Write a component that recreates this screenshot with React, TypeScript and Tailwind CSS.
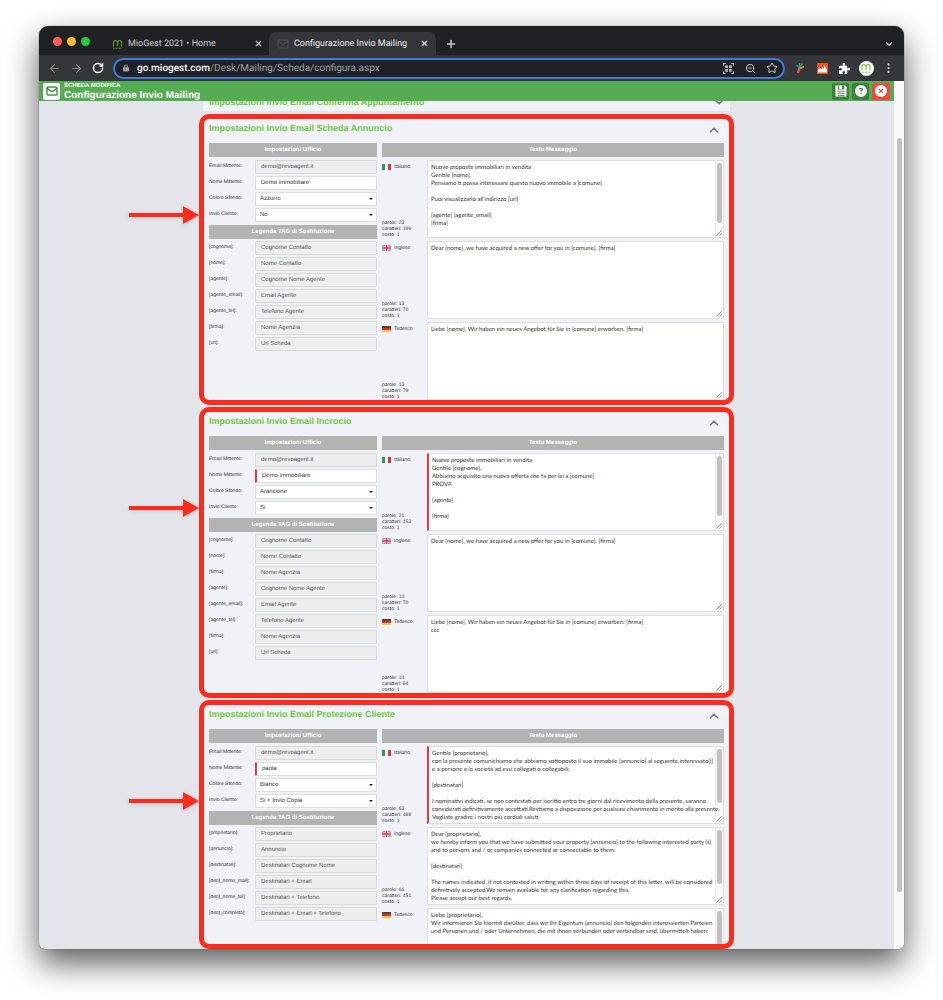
import React from "react";
import {
  ArrowLeft,
  ArrowRight,
  ChevronDown,
  ChevronUp,
  Mail,
  Plus,
  RotateCw,
  Star,
  X,
  ZoomOut,
} from "lucide-react";
import {
  FaCircleQuestion,
  FaCircleXmark,
  FaLock,
  FaPuzzlePiece,
} from "react-icons/fa6";

interface Field {
  label: string;
  value: string;
}

interface Message {
  lang: "it" | "en" | "de";
  words?: number;
  chars?: number;
  text: string;
  scroll?: "long" | "short";
  edited?: boolean;
}

interface Section {
  id: string;
  title: string;
  sender: string;
  edited?: boolean;
  color: string;
  send: string;
  tags: Field[];
  messages: Message[];
}

const sections: Section[] = [
  {
    id: "annuncio",
    title: "Impostazioni Invio Email Scheda Annuncio",
    sender: "Demo immobiliare",
    color: "Azzurro",
    send: "No",
    tags: [
      { label: "[cognome]:", value: "Cognome Contatto" },
      { label: "[nome]:", value: "Nome Contatto" },
      { label: "[agente]:", value: "Cognome Nome Agente" },
      { label: "[agente_email]:", value: "Email Agente" },
      { label: "[agente_tel]:", value: "Telefono Agente" },
      { label: "[firma]:", value: "Nome Agenzia" },
      { label: "[url]:", value: "Url Scheda" },
    ],
    messages: [
      {
        lang: "it",
        words: 23,
        chars: 199,
        scroll: "long",
        text: "Nuove proposte immobiliari in vendita\nGentile [nome].\nPensiamo ti possa interessare questo nuovo immobile a [comune]\n\nPuoi visualizzarlo all'indirizzo [url]\n\n[agente] [agente_email]\n[firma]",
      },
      {
        lang: "en",
        words: 13,
        chars: 70,
        text: "Dear [nome], we have acquired a new offer for you in [comune]. [firma]",
      },
      {
        lang: "de",
        words: 13,
        chars: 79,
        text: "Liebe [nome], Wir haben ein neues Angebot für Sie in [comune] erworben. [firma]",
      },
    ],
  },
  {
    id: "incrocio",
    title: "Impostazioni Invio Email Incrocio",
    sender: "Demo immobiliare",
    edited: true,
    color: "Arancione",
    send: "Si",
    tags: [
      { label: "[cognome]:", value: "Cognome Contatto" },
      { label: "[nome]:", value: "Nome Contatto" },
      { label: "[firma]:", value: "Nome Agenzia" },
      { label: "[agente]:", value: "Cognome Nome Agente" },
      { label: "[agente_email]:", value: "Email Agente" },
      { label: "[agente_tel]:", value: "Telefono Agente" },
      { label: "[firma]:", value: "Nome Agenzia" },
      { label: "[url]:", value: "Url Scheda" },
    ],
    messages: [
      {
        lang: "it",
        words: 21,
        chars: 153,
        scroll: "long",
        edited: true,
        text: "Nuove proposte immobiliari in vendita\nGentile [cognome].\nAbbiamo acquisito una nuova offerta che fa per lei a [comune]\nPROVA\n\n[agente]\n\n[firma]",
      },
      {
        lang: "en",
        words: 13,
        chars: 70,
        text: "Dear [nome], we have acquired a new offer for you in [comune]. [firma]",
      },
      {
        lang: "de",
        words: 14,
        chars: 84,
        text: "Liebe [nome], Wir haben ein neues Angebot für Sie in [comune] erworben. [firma]\nccc",
      },
    ],
  },
  {
    id: "protezione",
    title: "Impostazioni Invio Email Protezione Cliente",
    sender: "paola",
    edited: true,
    color: "Bianco",
    send: "Si + Invio Copia",
    tags: [
      { label: "[proprietario]:", value: "Proprietario" },
      { label: "[annuncio]:", value: "Annuncio" },
      { label: "[destinatari]:", value: "Destinatari Cognome Nome" },
      { label: "[dest_nome_mail]:", value: "Destinatari + Email" },
      { label: "[dest_nome_tel]:", value: "Destinatari + Telefono" },
      { label: "[dest_completo]:", value: "Destinatari + Email + Telefono" },
    ],
    messages: [
      {
        lang: "it",
        words: 63,
        chars: 488,
        scroll: "short",
        edited: true,
        text: "Gentile [proprietario],\ncon la presente comunichiamo che abbiamo sottoposto il suo immobile [annuncio] al seguente interessato(i)\ne a persone e/o società ad essi collegati o collegabili:\n\n[destinatari]\n\nI nominativi indicati, se non contestati per iscritto entro tre giorni dal ricevimento della presente, saranno\nconsiderati definitivamente accettati.Restiamo a disposizione per qualsiasi chiarimento in merito alla presente.\nVogliate gradire i nostri più cordiali saluti.",
      },
      {
        lang: "en",
        words: 66,
        chars: 451,
        scroll: "short",
        text: "Dear [proprietario],\nwe hereby inform you that we have submitted your property [annuncio] to the following interested party (s)\nand to persons and / or companies connected or connectable to them:\n\n[destinatari]\n\nThe names indicated, if not contested in writing within three days of receipt of this letter, will be considered\ndefinitively accepted.We remain available for any clarification regarding this.\nPlease accept our best regards.",
      },
      {
        lang: "de",
        scroll: "short",
        text: "Liebe [proprietario],\nWir informieren Sie hiermit darüber, dass wir Ihr Eigentum [annuncio] den folgenden interessierten Parteien\nund Personen und / oder Unternehmen, die mit ihnen verbunden oder verbindbar sind, übermittelt haben:",
      },
    ],
  },
];

const languages = { it: "Italiano:", en: "Inglese:", de: "Tedesco:" };

const Flag = ({ lang }: { lang: Message["lang"] }) => (
  <svg viewBox="0 0 18 12" className="h-[6px] w-[9px] shrink-0">
    {lang === "it" && (
      <>
        <rect width="18" height="12" fill="#f4f4f4" />
        <rect width="6" height="12" fill="#2f9a49" />
        <rect x="12" width="6" height="12" fill="#e0323c" />
      </>
    )}
    {lang === "en" && (
      <>
        <rect width="18" height="12" fill="#7f86c4" />
        <path d="M0 0l18 12M18 0L0 12" stroke="#dcd6ea" strokeWidth="1.500" />
        <path d="M9 0v12M0 6h18" stroke="#fff" strokeWidth="5" />
        <path d="M9 0v12M0 6h18" stroke="#e0323c" strokeWidth="3" />
      </>
    )}
    {lang === "de" && (
      <>
        <rect width="18" height="4" fill="#4a4040" />
        <rect y="4" width="18" height="4" fill="#dd3327" />
        <rect y="8" width="18" height="4" fill="#f3c43c" />
      </>
    )}
  </svg>
);

const LogoM = ({ className }: { className: string }) => (
  <svg viewBox="0 0 22 20" className={className} fill="none" stroke="currentColor">
    <path
      d="M3 14V7q0-4 4-4t4 4v6M11 7q0-4 4-4t4 4v7"
      strokeWidth="2.500"
      strokeLinecap="round"
    />
    <path d="M2 18.500h18" strokeWidth="2" strokeDasharray="2 1" />
  </svg>
);

const Grip = () => (
  <svg
    viewBox="0 0 8 8"
    className="absolute right-px bottom-px h-[6px] w-[6px]"
    stroke="#777"
    strokeWidth="1"
  >
    <path d="M0.500 7.500l7-7M4.500 7.500l3-3" />
  </svg>
);

const BarTitle = ({ children }: { children: React.ReactNode }) => (
  <h3 className="h-[14px] bg-[#b3b3b3] text-center text-[6px] leading-[15px] font-bold text-white">
    {children}
  </h3>
);

const inputBase =
  "h-[14px] w-full min-w-0 rounded-[1px] border text-[6px] leading-[12px] outline-none [text-rendering:geometricPrecision]";

const labelBase = "w-[46px] shrink-0 pt-[3px] text-[5px] leading-[7px]";

interface TextRowProps extends Field {
  id: string;
  readOnly?: boolean;
  edited?: boolean;
}

const TextRow: React.FC<TextRowProps> = ({ id, label, value, readOnly, edited }) => (
  <div className="flex">
    <label htmlFor={id} className={labelBase}>
      {label}
    </label>
    <input
      id={id}
      type="text"
      defaultValue={value}
      readOnly={readOnly}
      className={`${inputBase} px-[5px] ${
        readOnly ? "border-[#d6d8dc] bg-[#eeeeee] text-[#555]" : "border-[#dcdee3] bg-white"
      } ${edited ? "border-l-2 border-l-[#f0353f]" : ""}`}
    />
  </div>
);

const SelectRow: React.FC<Field & { id: string; options: string[] }> = ({
  id,
  label,
  value,
  options,
}) => (
  <div className="flex">
    <label htmlFor={id} className={labelBase}>
      {label}
    </label>
    <div className="relative min-w-0 flex-1">
      <select
        id={id}
        defaultValue={value}
        className={`${inputBase} block appearance-none border-[#dcdee3] bg-white px-1`}
      >
        {options.map((option) => (
          <option key={option}>{option}</option>
        ))}
      </select>
      <svg viewBox="0 0 4 2" className="absolute top-[6px] right-1 h-[2px] w-1">
        <path d="M0 0h4L2 2z" fill="#222" />
      </svg>
    </div>
  </div>
);

const MessageRow: React.FC<{ id: string; message: Message }> = ({ id, message }) => (
  <div className="flex h-[78px]">
    <div className="flex w-[45px] shrink-0 flex-col justify-between">
      <label htmlFor={id} className="flex gap-[3px] pt-1 text-[5px] leading-[7px]">
        <Flag lang={message.lang} />
        {languages[message.lang]}
      </label>
      {message.words && (
        <p className="text-[5px] leading-[6px]">
          parole: {message.words}
          <br />
          caratteri: {message.chars}
          <br />
          costo: 1
        </p>
      )}
    </div>
    <div
      className={`relative flex min-w-0 flex-1 border border-[#dcdee3] bg-white ${
        message.edited ? "border-l-2 border-l-[#f0353f]" : ""
      }`}
    >
      {message.scroll && (
        <div className="absolute inset-y-0 right-0 w-[8px] border-l border-[#e8e8e8] bg-[#fafafa] px-px pt-[2px]">
          <div
            className={`rounded-full bg-[#c1c1c1] ${
              message.scroll === "long" ? "h-[60px]" : "h-[54px]"
            }`}
          />
        </div>
      )}
      <textarea
        id={id}
        defaultValue={message.text}
        className="relative min-w-0 flex-1 resize-none overflow-hidden bg-transparent py-[3px] pl-[3px] font-[Lato,sans-serif] text-[6px] leading-[8px] whitespace-pre outline-none [text-rendering:geometricPrecision]"
      />
      <Grip />
    </div>
  </div>
);

const Arrow = () => (
  <svg
    viewBox="0 0 70 18"
    className="absolute top-[92px] right-full h-[18px] w-[70px] drop-shadow-sm"
    fill="#fb2c1d"
  >
    <path d="M0 7h54V0l16 9-16 9v-7H0z" />
  </svg>
);

const MailSection: React.FC<{ section: Section; last: boolean }> = ({ section, last }) => (
  <section className={`relative flex flex-col ${last ? "min-h-0 flex-1" : "shrink-0"}`}>
    <div className="min-h-0 flex-1 overflow-hidden rounded-[10px] border-5 border-[#fb2c1d] bg-[#f1f2f7] px-[5px]">
      <div className="mb-[6px] flex h-[18px] items-end justify-between pr-[3px]">
        <h2 className="text-[9px] leading-[17px] font-bold text-[#6cc93d]">{section.title}</h2>
        <button type="button" aria-label="Chiudi sezione">
          <ChevronUp className="h-[14px] w-[14px] text-[#777]" strokeWidth={3} />
        </button>
      </div>
      <div className="flex gap-[5px]">
        <div className="flex w-[168px] shrink-0 flex-col gap-[2px]">
          <div className="mb-px">
            <BarTitle>Impostazioni Ufficio</BarTitle>
          </div>
          <TextRow
            id={`${section.id}-email`}
            label="Email Mittente:"
            value="demo@revoagent.it"
            readOnly
          />
          <TextRow
            id={`${section.id}-nome`}
            label="Nome Mittente:"
            value={section.sender}
            edited={section.edited}
          />
          <SelectRow
            id={`${section.id}-colore`}
            label="Colore Sfondo:"
            value={section.color}
            options={["Azzurro", "Arancione", "Bianco"]}
          />
          <SelectRow
            id={`${section.id}-invio`}
            label="Invio Cliente:"
            value={section.send}
            options={["No", "Si", "Si + Invio Copia"]}
          />
          <div className="pt-px">
            <BarTitle>Legenda TAG di Sostituzione</BarTitle>
          </div>
          {section.tags.map((tag, index) => (
            <TextRow key={index} id={`${section.id}-tag-${index}`} {...tag} readOnly />
          ))}
        </div>
        <div className="flex min-w-0 flex-1 flex-col gap-[3px]">
          <BarTitle>Testo Messaggio</BarTitle>
          {section.messages.map((message) => (
            <MessageRow
              key={message.lang}
              id={`${section.id}-${message.lang}`}
              message={message}
            />
          ))}
        </div>
      </div>
    </div>
    <Arrow />
  </section>
);

const TabStrip = () => (
  <div className="flex h-[29px] shrink-0 items-end bg-[#202124] font-[Roboto,sans-serif] text-[9px] leading-[9px] text-[#c9cbce]">
    <div className="flex h-[23px] w-[64px] items-center gap-[5px] pb-[5px] pl-[14px]">
      <span className="h-[9px] w-[9px] rounded-full bg-[#ff5f57]" />
      <span className="h-[9px] w-[9px] rounded-full bg-[#febc2e]" />
      <span className="h-[9px] w-[9px] rounded-full bg-[#28c840]" />
    </div>
    <div className="flex h-[23px] w-[166px] items-center gap-[5px] pr-[6px] pl-[9px]">
      <LogoM className="h-[10px] w-[11px] text-[#4b9b2f]" />
      <span className="flex-1 pt-px whitespace-nowrap">MioGest 2021 • Home</span>
      <button type="button" aria-label="Chiudi scheda">
        <X className="h-[9px] w-[9px]" strokeWidth={3} />
      </button>
    </div>
    <div className="flex h-[23px] w-[167px] items-center gap-[5px] rounded-t-[7px] bg-[#35363a] pr-[7px] pl-2 text-[#e8eaed]">
      <Mail className="h-[12px] w-[12px] text-[#505155]" />
      <span className="flex-1 pt-px whitespace-nowrap">Configurazione Invio Mailing</span>
      <button type="button" aria-label="Chiudi scheda">
        <X className="h-[9px] w-[9px]" strokeWidth={3} />
      </button>
    </div>
    <button type="button" aria-label="Nuova scheda" className="flex h-[23px] items-center pl-[9px]">
      <Plus className="h-[12px] w-[12px]" strokeWidth={3} />
    </button>
    <button
      type="button"
      aria-label="Cerca schede"
      className="ml-auto flex h-[23px] items-center pr-[10px]"
    >
      <ChevronDown className="h-[10px] w-[10px]" strokeWidth={3} />
    </button>
  </div>
);

const ToolButton: React.FC<{ label: string; children: React.ReactNode }> = ({
  label,
  children,
}) => (
  <button
    type="button"
    aria-label={label}
    className="flex w-[22px] shrink-0 items-center justify-center"
  >
    {children}
  </button>
);

const Toolbar = () => (
  <div className="flex h-[26px] shrink-0 items-center bg-[#35363a] pr-[5px] pl-1 text-[#d5d7da]">
    <ToolButton label="Indietro">
      <ArrowLeft className="h-[13px] w-[13px] text-[#85878b]" />
    </ToolButton>
    <ToolButton label="Avanti">
      <ArrowRight className="h-[13px] w-[13px] text-[#85878b]" />
    </ToolButton>
    <ToolButton label="Ricarica">
      <RotateCw className="h-[12px] w-[12px] text-[#f1f3f4]" strokeWidth={3} />
    </ToolButton>
    <div className="mx-1 flex h-[21px] min-w-0 flex-1 items-center rounded-full border-2 border-[#3d7be0] bg-[#202124] pl-2">
      <FaLock className="mr-2 h-[8px] w-[6px] shrink-0 text-[#9aa0a6]" />
      <div className="flex-1 truncate font-[Roboto,sans-serif] text-[10px] text-[#9aa0a6]">
        <span className="font-medium text-white">go.miogest.com</span>
        /Desk/Mailing/Scheda/configura.aspx
      </div>
      <ToolButton label="Codice QR">
        <svg viewBox="0 0 20 20" className="h-[11px] w-[11px]" fill="none" stroke="#b5b8bc">
          <path d="M1 5V1h4M15 1h4v4M19 15v4h-4M5 19H1v-4" strokeWidth="2" />
          <path
            d="M4 4h5v5H4zM11 4h5v5h-5zM4 11h5v5H4zM11 11h5v5h-5z"
            fill="#b5b8bc"
            stroke="none"
          />
        </svg>
      </ToolButton>
      <ToolButton label="Zoom">
        <ZoomOut className="h-[11px] w-[11px]" strokeWidth={2} />
      </ToolButton>
      <ToolButton label="Preferiti">
        <Star className="h-[12px] w-[12px]" strokeWidth={2} />
      </ToolButton>
    </div>
    <ToolButton label="Estensione colori">
      <svg viewBox="0 0 20 24" className="h-[12px] w-[10px]" fill="none" strokeWidth="3">
        <path d="M9 13L3 6M9 12l6-9" stroke="#2f8f63" />
        <path d="M9 13V2" stroke="#3aa0a0" />
        <path d="M10 13l8-4" stroke="#e0a23a" />
        <path d="M9 12l-3 10" stroke="#d9543c" strokeWidth="5" />
      </svg>
    </ToolButton>
    <ToolButton label="Estensione grafici">
      <svg viewBox="0 0 22 22" className="h-[11px] w-[11px]">
        <rect width="22" height="22" rx="1" fill="#f04e23" />
        <path d="M2 19v-7h3v-2h3v2h2V8h2v3h2V5h2v4h2v3h2v7z" fill="#fff" />
      </svg>
    </ToolButton>
    <ToolButton label="Estensioni">
      <FaPuzzlePiece className="h-[11px] w-[11px] text-white" />
    </ToolButton>
    <ToolButton label="Profilo">
      <span className="flex h-[15px] w-[15px] items-center justify-center rounded-full bg-white">
        <LogoM className="h-[10px] w-[12px] text-[#7fbf4d]" />
      </span>
    </ToolButton>
    <ToolButton label="Menu">
      <svg viewBox="0 0 4 16" className="h-[10px] w-[3px]" fill="currentColor">
        <circle cx="2" cy="2" r="1.800" />
        <circle cx="2" cy="8" r="1.800" />
        <circle cx="2" cy="14" r="1.800" />
      </svg>
    </ToolButton>
  </div>
);

const PageHeader = () => (
  <header className="flex h-[20px] shrink-0 items-center gap-1 bg-[#55ac53] px-1 text-white">
    <span className="flex h-[17px] w-[17px] items-center justify-center rounded-[2px] bg-white">
      <Mail className="h-[12px] w-[12px] text-[#459a43]" strokeWidth={3} />
    </span>
    <div className="flex-1 pt-px">
      <p className="text-[6px] leading-[7px] font-bold">SCHEDA MODIFICA</p>
      <h1 className="text-[10px] leading-[11px] font-bold">Configurazione Invio Mailing</h1>
    </div>
    <div className="flex gap-[3px]">
      <button
        type="button"
        aria-label="Salva"
        className="flex h-[17px] w-[17px] items-center justify-center rounded-[2px] bg-[#3d7f3d]"
      >
        <svg viewBox="0 0 24 24" className="h-[12px] w-[12px]">
          <path d="M1 1h19l3 3v19H1z" fill="#fff" />
          <path d="M6 1h12v8H6z" fill="#3d7f3d" />
          <path d="M8 1h6v7H8z" fill="#fff" />
          <path d="M5 13h14M5 17h14M5 21h14" stroke="#3d7f3d" strokeWidth="1.500" />
        </svg>
      </button>
      <button
        type="button"
        aria-label="Aiuto"
        className="flex h-[17px] w-[17px] items-center justify-center rounded-[2px] bg-[#3d7f3d]"
      >
        <FaCircleQuestion className="h-[12px] w-[12px]" />
      </button>
      <button
        type="button"
        aria-label="Chiudi"
        className="flex h-[17px] w-[18px] items-center justify-center rounded-[2px] bg-[#ef4640]"
      >
        <FaCircleXmark className="h-[12px] w-[12px]" />
      </button>
    </div>
  </header>
);

export default function App() {
  return (
    <div className="h-screen overflow-hidden bg-white px-[39px] pt-[26px] pb-[51px]">
      <div className="flex h-full flex-col overflow-hidden rounded-t-[9px] rounded-b-[6px] bg-[#e3e5ea] font-['Liberation_Sans',Arial,sans-serif] text-[#333] shadow-[0_14px_32px_rgba(0,0,0,0.65),0_0_1px_rgba(0,0,0,0.8)] [text-rendering:geometricPrecision]">
        <TabStrip />
        <Toolbar />
        <div className="flex min-h-0 flex-1">
          <div className="flex min-w-0 flex-1 flex-col">
            <PageHeader />
            <main className="mx-auto flex min-h-0 w-full max-w-[535px] flex-1 flex-col gap-[2px] overflow-y-clip">
              {/* Collapsed section, scrolled partly under the header */}
              <section className="mx-1 -mt-2 mb-px flex h-[18px] shrink-0 items-center justify-between bg-[#f1f2f7] pr-[4px] pl-[6px]">
                <h2 className="text-[9px] leading-[17px] font-bold text-[#6cc93d]">
                  Impostazioni Invio Email Conferma Appuntamento
                </h2>
                <button type="button" aria-label="Apri sezione">
                  <ChevronDown className="h-[14px] w-[14px] text-[#777]" strokeWidth={3} />
                </button>
              </section>
              {sections.map((section, index) => (
                <MailSection
                  key={section.id}
                  section={section}
                  last={index === sections.length - 1}
                />
              ))}
            </main>
          </div>
          {/* Page scrollbar */}
          <div className="flex w-[10px] shrink-0 bg-[#fafafa] py-[57px] pr-[2px] pl-[3px]">
            <div className="flex-1 rounded-full bg-[#c1c1c1]" />
          </div>
        </div>
      </div>
    </div>
  );
}
